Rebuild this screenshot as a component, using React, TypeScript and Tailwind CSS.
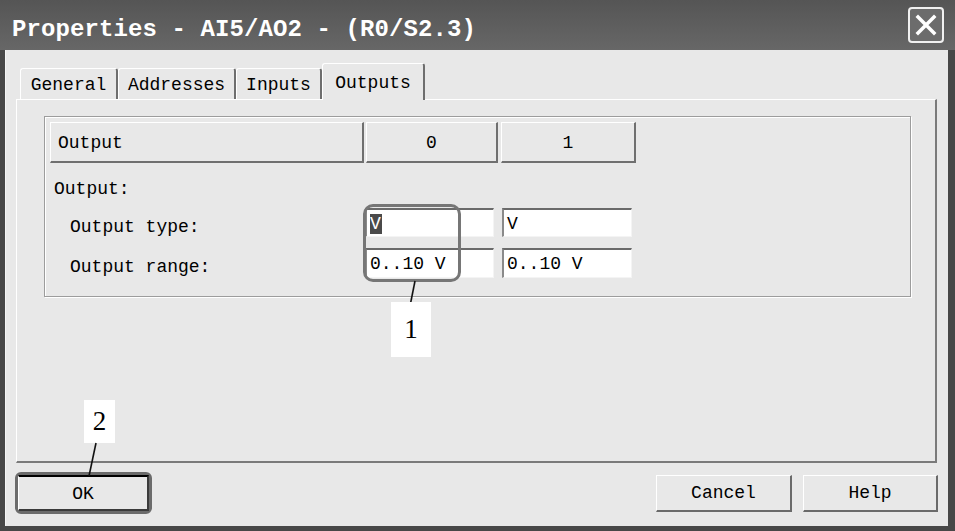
import React from "react";

const mono = "font-['Liberation_Mono','DejaVu_Sans_Mono',monospace]";
const serif = "font-['Liberation_Serif','Times_New_Roman',serif]";

function Tab({ label, active, width }: { label: string; active?: boolean; width: string }) {
  if (active) {
    return (
      <div
        className={`relative z-10 -mb-px h-[37px] ${width} bg-[#e8e8e8] border-t border-l border-white border-r-2 border-r-[#6e6e6e] rounded-t-[3px] flex items-start justify-center pt-[6px] text-[18px] text-black`}
      >
        {label}
      </div>
    );
  }
  return (
    <div
      className={`h-[31px] ${width} bg-[#e8e8e8] border-t border-l border-white border-r-2 border-r-[#6e6e6e] rounded-t-[3px] flex items-center justify-center pt-[2px] text-[18px] text-black`}
    >
      {label}
    </div>
  );
}

function HeaderCell({ label, width, left }: { label: string; width: string; left?: boolean }) {
  return (
    <div
      className={`h-[41px] ${width} bg-[#e8e8e8] border-t border-l border-white border-r-2 border-b-2 border-r-[#6f6f6f] border-b-[#6f6f6f] flex items-center pt-[3px] text-[18px] ${
        left ? "pl-[7px]" : "justify-center"
      }`}
    >
      {label}
    </div>
  );
}

function Field({ value, width, selected, h }: { value: string; width: string; selected?: boolean; h: string }) {
  return (
    <div
      className={`${h} ${width} bg-white border-t-2 border-l-2 border-t-[#6a6a6a] border-l-[#8a8a8a] border-r border-b border-r-[#f4f4f4] border-b-[#f4f4f4] flex items-center pl-[3px] pt-[2px] text-[18px]`}
    >
      {selected ? <span className="bg-[#4a4a4a] text-white leading-[20px] pr-[1px]">{value}</span> : value}
    </div>
  );
}

function Button({ label, width }: { label: string; width: string }) {
  return (
    <div
      className={`h-[37px] ${width} bg-[#e8e8e8] border-t border-l border-white border-r-2 border-b-2 border-r-[#6a6a6a] border-b-[#6a6a6a] flex items-center justify-center pt-[2px] text-[18px]`}
    >
      {label}
    </div>
  );
}

export default function App() {
  return (
    <div className={`w-[955px] h-[531px] bg-[#474747] pb-[5px] overflow-hidden ${mono} text-black`}>
      {/* title bar */}
      <div className="h-[50px] bg-gradient-to-b from-[#555555] to-[#676767] flex items-center pl-[12px] pr-[11px]">
        <span className="text-[24px] font-bold text-white tracking-[0.1px] pt-[10px]">
          Properties - AI5/AO2 - (R0/S2.3)
        </span>
        <div className="ml-auto w-[36px] h-[36px] rounded-[4px] border-2 border-[#f0f0f0] bg-[#6c6c6c] flex items-center justify-center">
          <svg width="24" height="24" viewBox="0 0 24 24">
            <path d="M4 4 L20 20 M20 4 L4 20" stroke="#ffffff" strokeWidth="3.5" strokeLinecap="square" />
          </svg>
        </div>
      </div>

      {/* client area */}
      <div className="ml-[5px] mr-[7px] h-[476px] bg-[#e8e8e8] border-l border-[#f4f4f4] relative">
        <div className="flex items-end pl-[14px] pt-[13px]">
          <Tab label="General" width="w-[98px]" />
          <Tab label="Addresses" width="w-[118px]" />
          <Tab label="Inputs" width="w-[86px]" />
          <Tab label="Outputs" width="w-[103px]" active />
        </div>

        {/* tab panel */}
        <div className="ml-[10px] w-[921px] h-[364px] border-t border-l border-white border-r-2 border-b-2 border-r-[#7a7a7a] border-b-[#7a7a7a] pt-[16px] pl-[27px]">
          <div className="w-[867px] h-[181px] border border-[#9c9c9c] shadow-[inset_1px_1px_0_#ffffff,1px_1px_0_#ffffff] pt-[5px] pl-[5px]">
            <div className="flex">
              <HeaderCell label="Output" width="w-[314px]" left />
              <div className="w-[2px]" />
              <HeaderCell label="0" width="w-[132px]" />
              <div className="w-[3px]" />
              <HeaderCell label="1" width="w-[135px]" />
            </div>
            <div className="mt-[16px] pl-[4px] h-[20px] leading-[20px] text-[18px]">Output:</div>
            <div className="mt-[9px] h-[29px] flex items-start">
              <div className="w-[315px] pl-[20px] pt-[9px] leading-[20px] text-[18px]">Output type:</div>
              <Field value="V" width="w-[129px]" h="h-[29px]" selected />
              <div className="w-[8px]" />
              <Field value="V" width="w-[130px]" h="h-[29px]" />
            </div>
            <div className="mt-[11px] h-[30px] flex items-start">
              <div className="w-[315px] pl-[20px] pt-[9px] leading-[20px] text-[18px]">Output range:</div>
              <Field value="0..10 V" width="w-[129px]" h="h-[30px]" />
              <div className="w-[8px]" />
              <Field value="0..10 V" width="w-[130px]" h="h-[30px]" />
            </div>
          </div>
        </div>

        {/* dialog buttons */}
        <div className="mt-[9px] ml-[9px] mr-[10px] flex items-center">
          <div className="w-[137px] h-[42px] rounded-[6px] border-[3px] border-[#6b6b6b] p-0">
            <div className="h-full w-full border-t-2 border-t-black border-l border-l-white border-r-2 border-b-2 border-r-[#3a3a3a] border-b-[#3a3a3a] bg-[#e8e8e8] flex items-center justify-center pt-[2px] text-[18px]">
              OK
            </div>
          </div>
          <div className="ml-auto flex gap-[11px]">
            <Button label="Cancel" width="w-[136px]" />
            <Button label="Help" width="w-[135px]" />
          </div>
        </div>

        {/* annotation 1 */}
        <div className="absolute left-[357px] top-[154px] w-[98px] h-[78px] rounded-[10px] border-[3px] border-[#767676]" />
        <svg className="absolute left-[400px] top-[230px]" width="14" height="27" viewBox="0 0 14 27">
          <line x1="9" y1="1" x2="4" y2="26" stroke="#111111" strokeWidth="1.6" />
        </svg>
        <div
          className={`absolute left-[385px] top-[252px] w-[40px] h-[55px] bg-white flex items-center justify-center text-[27px] ${serif}`}
        >
          1
        </div>

        {/* annotation 2 */}
        <div
          className={`absolute left-[78px] top-[350px] w-[31px] h-[43px] bg-white flex items-center justify-center text-[27px] ${serif}`}
        >
          2
        </div>
        <svg className="absolute left-[80px] top-[392px]" width="14" height="35" viewBox="0 0 14 35">
          <line x1="10" y1="1" x2="3" y2="34" stroke="#111111" strokeWidth="1.6" />
        </svg>
      </div>
    </div>
  );
}
